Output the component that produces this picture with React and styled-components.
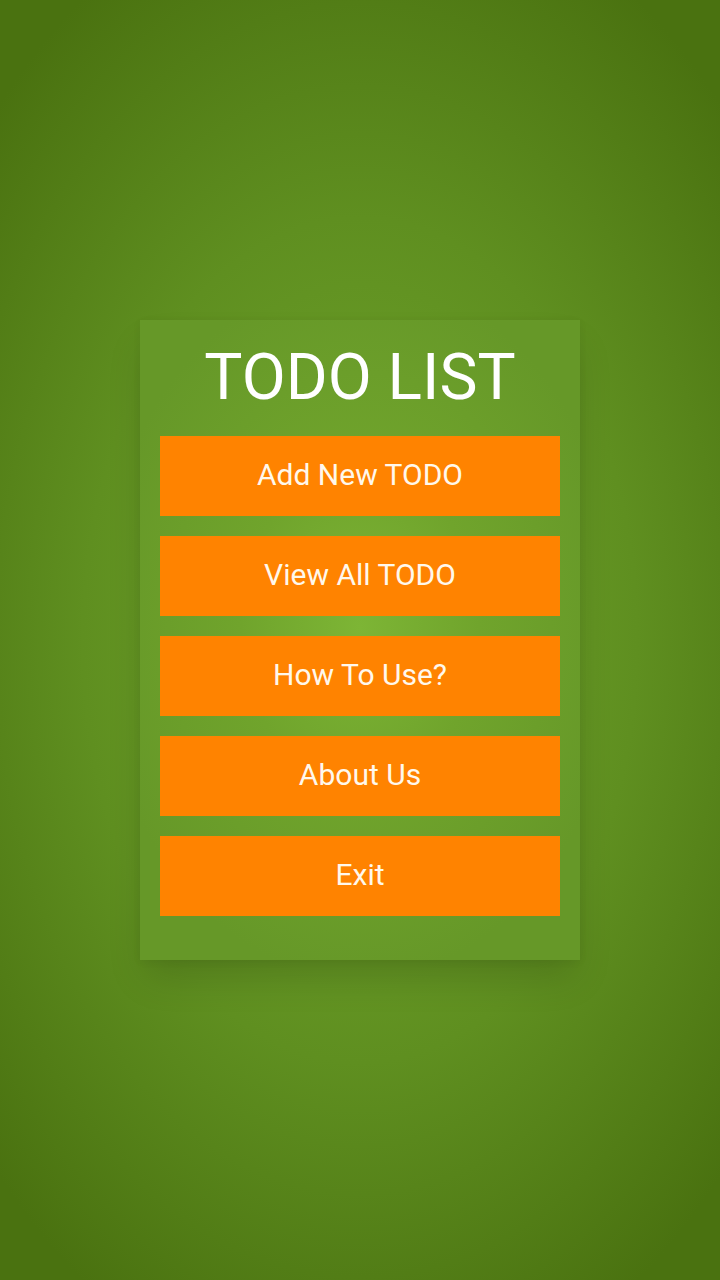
import React from "react";
import styled, { createGlobalStyle } from "styled-components";

const Global = createGlobalStyle`
  html, body { margin: 0; padding: 0; height: 100%; }
  body { font-family: Roboto, "Noto Sans", sans-serif; }
  #root { height: 100%; }
`;

const Screen = styled.div`
  width: 720px;
  height: 1280px;
  display: flex;
  align-items: center;
  justify-content: center;
  background: radial-gradient(ellipse 70% 60% at 50% 50%, #72a82d 0%, #5f8f20 55%, #4a7210 100%);
`;

const Card = styled.div`
  width: 440px;
  box-sizing: border-box;
  padding: 20px 20px 44px;
  display: flex;
  flex-direction: column;
  align-items: stretch;
  gap: 20px;
  background: radial-gradient(ellipse 60% 55% at 50% 48%, #7db535 0%, #70a42c 45%, #669828 100%);
  box-shadow: 0 22px 36px -6px rgba(0, 0, 0, 0.16), 0 2px 8px rgba(0, 0, 0, 0.06);
`;

const Title = styled.h1`
  margin: 0;
  font-family: Roboto, sans-serif;
  font-weight: 400;
  font-size: 64px;
  line-height: 76px;
  color: #ffffff;
  text-align: center;
`;

const MenuButton = styled.button`
  height: 80px;
  border: none;
  border-radius: 0;
  background: #ff8300;
  color: #fff8ec;
  font-family: Roboto, sans-serif;
  font-size: 30px;
  font-weight: 400;
  cursor: pointer;
  padding: 0 0 4px;
`;

const items = ["Add New TODO", "View All TODO", "How To Use?", "About Us", "Exit"];

export default function App() {
  return (
    <>
      <Global />
      <Screen>
        <Card>
          <Title>TODO LIST</Title>
          {items.map((t) => (
            <MenuButton key={t}>{t}</MenuButton>
          ))}
        </Card>
      </Screen>
    </>
  );
}
